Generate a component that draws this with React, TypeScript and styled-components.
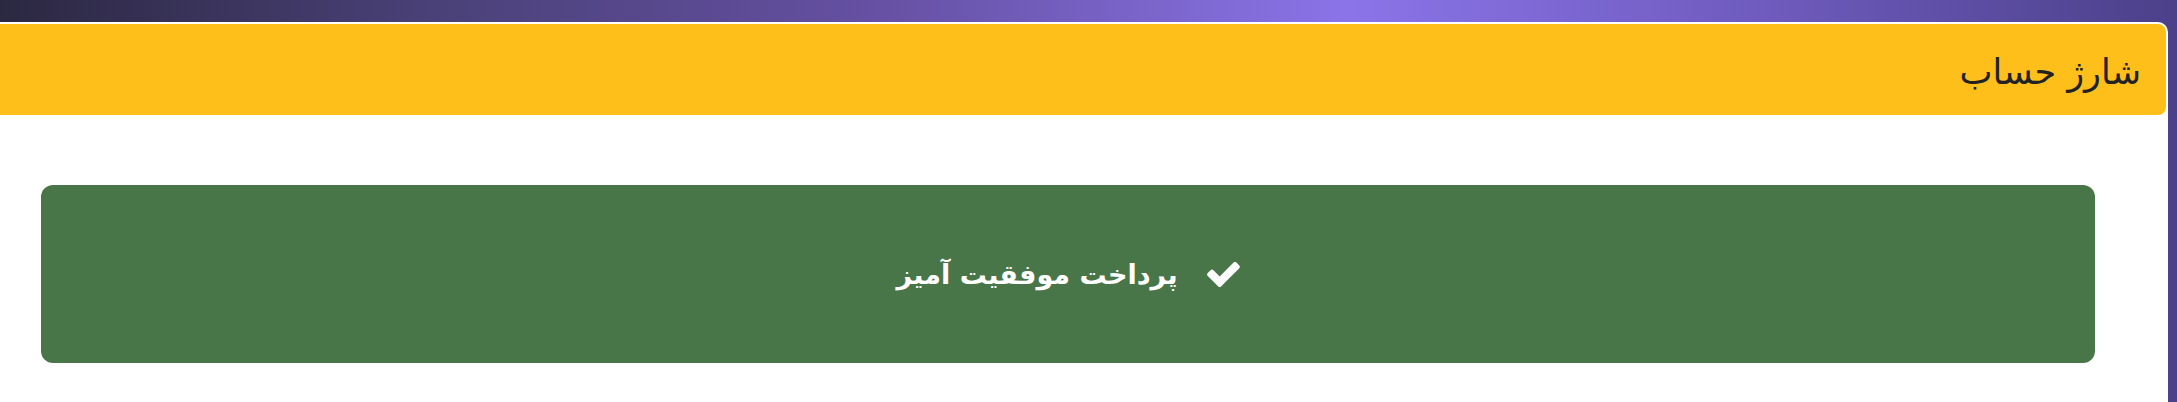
import React from 'react';
import styled, { createGlobalStyle } from 'styled-components';

const GlobalStyle = createGlobalStyle`
  html, body {
    margin: 0;
    padding: 0;
    height: 100%;
  }
  body {
    font-family: "DejaVu Sans", "Noto Sans", sans-serif;
    background: linear-gradient(90deg, #2b2841 0%, #4a4178 20%, #6550a2 40%, #8a74e8 62%, #6d5abb 82%, #4b4089 100%);
    overflow: hidden;
  }
`;

const Page = styled.div`
  direction: rtl;
  min-height: 402px;
  padding: 22px 9px 0 0;
  box-sizing: border-box;
  display: flex;
`;

const Card = styled.div`
  flex: 1;
  margin-left: -31px;
  background: #ffffff;
  border-radius: 10px 10px 0 0;
  padding: 2px 2px 0 2px;
  display: flex;
  flex-direction: column;
  min-height: 380px;
`;

const CardHeader = styled.div`
  background: #ffbf1b;
  border-radius: 8px;
  height: 91px;
  display: flex;
  align-items: center;
  padding: 4px 25px 0;
  box-sizing: border-box;
  font-size: 35px;
  color: #222222;
`;

const CardBody = styled.div`
  padding: 70px 71px 0 70px;
`;

const SuccessBox = styled.div`
  background: #497648;
  border-radius: 12px;
  height: 178px;
  display: flex;
  align-items: center;
  justify-content: center;
  gap: 29px;
  color: #ffffff;
  font-size: 27px;
  font-weight: bold;
`;

const CheckSvg = styled.svg`
  width: 33px;
  height: 25px;
  fill: currentColor;
  flex-shrink: 0;
`;

const CheckIcon: React.FC = () => (
  <CheckSvg viewBox="121 338 1550 1184" aria-hidden="true">
    <path d="M1671 566q0 40-28 68l-724 724-136 136q-28 28-68 28t-68-28l-136-136-362-362q-28-28-28-68t28-68l136-136q28-28 68-28t68 28l294 295 656-657q28-28 68-28t68 28l136 136q28 28 28 68z" />
  </CheckSvg>
);

const App: React.FC = () => {
  return (
    <>
      <GlobalStyle />
      <Page>
        <Card>
          <CardHeader>شارژ حساب</CardHeader>
          <CardBody>
            <SuccessBox>
              <CheckIcon />
              <span>پرداخت موفقیت آمیز</span>
            </SuccessBox>
          </CardBody>
        </Card>
      </Page>
    </>
  );
};

export default App;
